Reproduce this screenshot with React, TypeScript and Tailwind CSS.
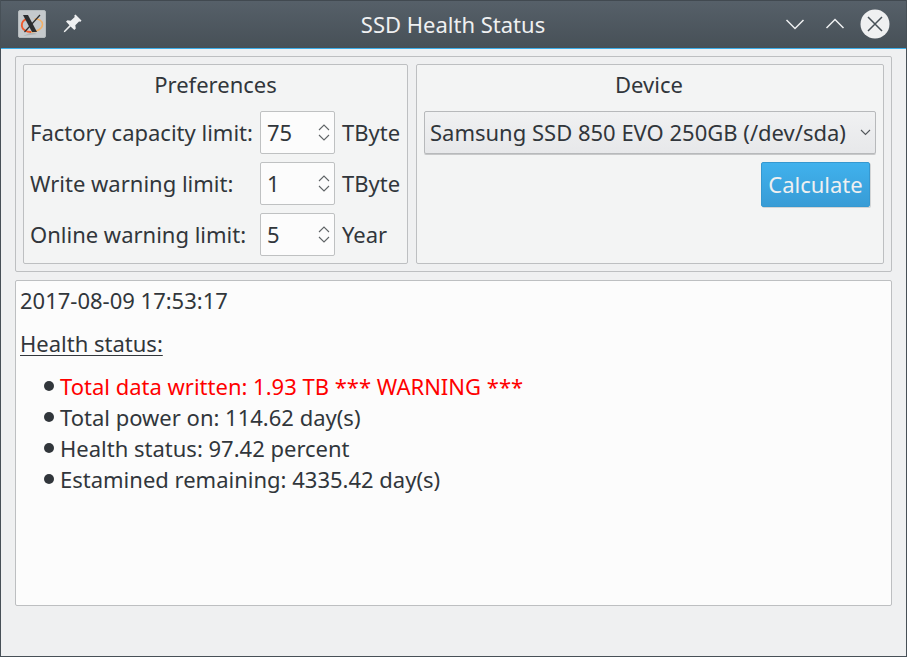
import React from "react";

const limits = [
  { label: "Factory capacity limit:", value: "75", unit: "TByte" },
  { label: "Write warning limit:", value: "1", unit: "TByte" },
  { label: "Online warning limit:", value: "5", unit: "Year" },
];

const results = [
  { text: "Total data written: 1.93 TB *** WARNING ***", warning: true },
  { text: "Total power on: 114.62 day(s)", warning: false },
  { text: "Health status: 97.42 percent", warning: false },
  { text: "Estamined remaining: 4335.42 day(s)", warning: false },
];

function AppIcon() {
  return (
    <svg width="28" height="28" viewBox="0 0 28 28" fill="none">
      <rect x="0.5" y="0.5" width="27" height="27" rx="1.5" fill="#c5c9cc" stroke="#b4babd" />
      <path d="M5 26l9-4 5 2z" fill="#aeb3b6" />
      <path d="M10 8.800C5 9.500 3.500 13 3.800 16C4.200 19.500 8 22 13 22" stroke="#f0582a" strokeWidth="1.900" />
      <path d="M13 22C19 22 24.500 18.500 24.500 14.500C24.500 10.500 20.500 8.800 16.500 9" stroke="#f3b066" strokeWidth="1.500" />
      <path d="M5 5h5l9 17h-5z" fill="#2c2e30" />
      <path d="M22 5L6.500 22" stroke="#2c2e30" strokeWidth="1.200" />
    </svg>
  );
}

function PinIcon() {
  return (
    <svg width="20" height="20" viewBox="0 0 20 20" fill="#eff0f1">
      <path d="M12.500 0.500L18.500 6.500L17.500 7.800L16 7.500L12.300 11.300L12.800 14.500L11.300 16L7.600 12.500L2 18L0.800 18.200L1 17L6.500 11.300L3 7.600L4.500 6.200L7.700 6.700L11.700 3L11.300 1.500Z" />
    </svg>
  );
}

function SpinBox({ value }: { value: string }) {
  return (
    <div className="flex h-[43px] w-[75px] items-center justify-between rounded-[2px] border border-[#bfc1c2] bg-[#fcfcfc] pr-[4px] pl-[6px]">
      <span>{value}</span>
      <svg width="12" height="18" viewBox="0 0 12 18" fill="none" stroke="#606467" strokeWidth="1.100">
        <path d="M1 6L6 1L11 6M1 11L6 16L11 11" />
      </svg>
    </div>
  );
}

export default function App() {
  return (
    <div className="flex h-[657px] w-[907px] flex-col overflow-hidden border border-t-0 border-[#475057] bg-[#eff0f1] font-['Noto_Sans',sans-serif] text-[22px] leading-[31px] whitespace-nowrap text-[#31363b]">
      <header className="-mx-px flex h-[49px] shrink-0 items-center border-t border-b border-t-[#414950] border-b-[#3daee9] bg-linear-to-b from-[#566069] to-[#475057] text-[#eff0f1]">
        <div className="flex w-[124px] items-center gap-[17px] pb-px pl-[18px]">
          <AppIcon />
          <PinIcon />
        </div>
        <h1 className="flex-1 text-center">SSD Health Status</h1>
        <svg className="mb-px" width="125" height="30" viewBox="-6 0 125 30" fill="none" stroke="#eff0f1" strokeWidth="1.500">
          <path d="M-1.500 11L7 19.500L15.500 11" />
          <path d="M38.500 19L47 10.500L55.500 19" />
          <circle cx="87" cy="15" r="14.500" fill="#eff0f1" stroke="none" />
          <path d="M80 8L94 22M94 8L80 22" stroke="#475057" />
        </svg>
      </header>

      <main className="flex flex-col gap-2 px-[14px] pt-[7px]">
        <section className="flex h-[216px] w-[877px] gap-2 rounded-[2px] border border-[#bdbfc1] p-[7px]">
          <fieldset className="h-[200px] w-[385px] rounded-[2px] border border-[#bdbfc1] bg-[#f3f4f4] px-[6px] pt-1">
            <h2 className="mb-[11px] text-center">Preferences</h2>
            <div className="grid grid-cols-[230px_82px_auto] items-center gap-y-2">
              {limits.map((l) => (
                <React.Fragment key={l.label}>
                  <label>{l.label}</label>
                  <SpinBox value={l.value} />
                  <span>{l.unit}</span>
                </React.Fragment>
              ))}
            </div>
          </fieldset>
          <fieldset className="flex h-[200px] w-[468px] flex-col rounded-[2px] border border-[#bdbfc1] bg-[#f3f4f4] px-[7px] pt-1">
            <h2 className="mb-[11px] pr-[2px] text-center">Device</h2>
            <div className="flex h-[43px] w-[452px] items-center justify-between rounded-[2px] border border-[#b7b9bb] bg-linear-to-b from-[#f0f1f2] to-[#e7e8ea] pr-[4px] pl-[5px] shadow-[0_1px_0_#c7c8c9]">
              <span>Samsung SSD 850 EVO 250GB (/dev/sda)</span>
              <svg width="11" height="8" viewBox="0 0 11 8" fill="none" stroke="#53575b" strokeWidth="1.100">
                <path d="M1 1L5.500 5.500L10 1" />
              </svg>
            </div>
            <button className="mt-2 mr-[6px] h-[45px] w-[109px] self-end rounded-[2px] border border-[#3598d0] bg-linear-to-b from-[#40b1ed] to-[#389cd6] text-[#eff0f1] shadow-[1px_1px_0_#d2d4d5]">
              Calculate
            </button>
          </fieldset>
        </section>

        <section className="h-[326px] w-[877px] rounded-[2px] border border-[#bdbfc1] bg-[#fcfcfc] px-1 pt-1">
          <p>2017-08-09 17:53:17</p>
          <p className="mt-3 underline decoration-1 underline-offset-[3px]">Health status:</p>
          <ul className="mt-3">
            {results.map((r) => (
              <li key={r.text} className="flex items-center pl-[24px]">
                <span className="mr-[6px] mb-px size-[10px] rounded-full bg-[#31363b]" />
                <span className={r.warning ? "text-[#ff0000]" : ""}>{r.text}</span>
              </li>
            ))}
          </ul>
        </section>
      </main>
    </div>
  );
}
